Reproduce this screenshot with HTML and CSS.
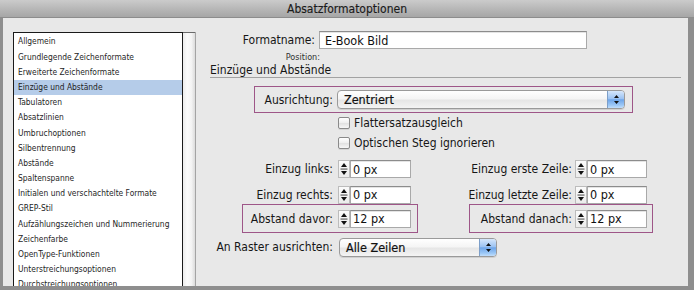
FILE: index.html
```html
<!DOCTYPE html>
<html lang="de">
<head>
<meta charset="utf-8">
<title>Absatzformatoptionen</title>
<link rel="stylesheet" href="styles.css">
</head>
<body>
<div class="window">
  <div class="titlebar">Absatzformatoptionen</div>
  <div class="content">
    <div class="sidebar">
      <ul class="list">
        <li>Allgemein</li>
        <li>Grundlegende Zeichenformate</li>
        <li>Erweiterte Zeichenformate</li>
        <li class="selected">Einzüge und Abstände</li>
        <li>Tabulatoren</li>
        <li>Absatzlinien</li>
        <li>Umbruchoptionen</li>
        <li>Silbentrennung</li>
        <li>Abstände</li>
        <li>Spaltenspanne</li>
        <li>Initialen und verschachtelte Formate</li>
        <li>GREP-Stil</li>
        <li>Aufzählungszeichen und Nummerierung</li>
        <li>Zeichenfarbe</li>
        <li>OpenType-Funktionen</li>
        <li>Unterstreichungsoptionen</li>
        <li>Durchstreichungsoptionen</li>
      </ul>
      <div class="scrolltrack"></div>
      <div class="divider"></div>
    </div>
    <div class="main">
      <div class="namerow">
        <span class="namelabel">Formatname:</span>
        <span class="field namefield">E-Book Bild</span>
      </div>
      <div class="position">Position:</div>
      <div class="heading">Einzüge und Abstände</div>

      <div class="alignbox">
        <span class="alignlabel">Ausrichtung:</span>
        <span class="popup alignpopup"><span class="popuptext">Zentriert</span><span class="popuparrows"><svg width="7" height="11" viewBox="0 0 7 11"><path d="M3.5 1 L6 4 L1 4 Z M3.5 10 L6 7 L1 7 Z" fill="#111"/></svg></span></span>
      </div>

      <div class="checkrow"><span class="checkbox"></span><span>Flattersatzausgleich</span></div>
      <div class="checkrow"><span class="checkbox"></span><span>Optischen Steg ignorieren</span></div>

      <div class="numrow row1">
        <span class="lbl lbl-l">Einzug links:</span>
        <span class="spin"><svg width="10" height="16" viewBox="0 0 10 16"><path d="M5 2 L8 6 L2 6 Z M5 14 L8 10 L2 10 Z" fill="#111"/><rect x="1.5" y="7.6" width="7" height="0.9" fill="#333"/></svg></span>
        <span class="field numfield">0 px</span>
        <span class="lbl lbl-r">Einzug erste Zeile:</span>
        <span class="spin spin-r"><svg width="10" height="16" viewBox="0 0 10 16"><path d="M5 2 L8 6 L2 6 Z M5 14 L8 10 L2 10 Z" fill="#111"/><rect x="1.5" y="7.6" width="7" height="0.9" fill="#333"/></svg></span>
        <span class="field numfield-r">0 px</span>
      </div>

      <div class="numrow row2">
        <span class="lbl lbl-l">Einzug rechts:</span>
        <span class="spin"><svg width="10" height="16" viewBox="0 0 10 16"><path d="M5 2 L8 6 L2 6 Z M5 14 L8 10 L2 10 Z" fill="#111"/><rect x="1.5" y="7.6" width="7" height="0.9" fill="#333"/></svg></span>
        <span class="field numfield">0 px</span>
        <span class="lbl lbl-r">Einzug letzte Zeile:</span>
        <span class="spin spin-r"><svg width="10" height="16" viewBox="0 0 10 16"><path d="M5 2 L8 6 L2 6 Z M5 14 L8 10 L2 10 Z" fill="#111"/><rect x="1.5" y="7.6" width="7" height="0.9" fill="#333"/></svg></span>
        <span class="field numfield-r">0 px</span>
      </div>

      <div class="numrow row3">
        <div class="hl hl-l">
          <span class="lbl hl-lbl-l">Abstand davor:</span>
          <span class="spin"><svg width="10" height="16" viewBox="0 0 10 16"><path d="M5 2 L8 6 L2 6 Z M5 14 L8 10 L2 10 Z" fill="#111"/><rect x="1.5" y="7.6" width="7" height="0.9" fill="#333"/></svg></span>
          <span class="field numfield">12 px</span>
        </div>
        <div class="hl hl-r">
          <span class="lbl hl-lbl-r">Abstand danach:</span>
          <span class="spin spin-r"><svg width="10" height="16" viewBox="0 0 10 16"><path d="M5 2 L8 6 L2 6 Z M5 14 L8 10 L2 10 Z" fill="#111"/><rect x="1.5" y="7.6" width="7" height="0.9" fill="#333"/></svg></span>
          <span class="field numfield-r">12 px</span>
        </div>
      </div>

      <div class="numrow row4">
        <span class="lbl lbl-l">An Raster ausrichten:</span>
        <span class="popup gridpopup"><span class="popuptext">Alle Zeilen</span><span class="popuparrows"><svg width="7" height="11" viewBox="0 0 7 11"><path d="M3.5 1 L6 4 L1 4 Z M3.5 10 L6 7 L1 7 Z" fill="#111"/></svg></span></span>
      </div>
    </div>
  </div>
</div>
</body>
</html>
```

FILE: styles.css
```css
* { box-sizing: border-box; }
html, body { margin: 0; padding: 0; }
body {
  width: 694px;
  height: 290px;
  overflow: hidden;
  background: #8e8e8e;
  font-family: "DejaVu Sans Condensed", "DejaVu Sans", sans-serif;
  color: #161616;
}
.window {
  width: 694px;
  height: 290px;
  display: flex;
  flex-direction: column;
  background: #8e8e8e;
}
.titlebar {
  flex: none;
  height: 18px;
  background: linear-gradient(#cbcbcb, #b4b4b4 60%, #a6a6a6);
  border-bottom: 1px solid #8c8c8c;
  text-align: center;
  font-size: 12px;
  line-height: 18px;
  color: #1a1a1a;
  -webkit-text-stroke: 0.15px #1a1a1a;
}
.content {
  flex: 1;
  margin: 0 6px 4px 3px;
  background: #e8e8e8;
  display: flex;
  overflow: hidden;
}
.sidebar {
  flex: none;
  display: flex;
  align-items: flex-start;
  padding: 14px 1px 0 10px;
}
.list {
  list-style: none;
  margin: 0;
  width: 170px;
  height: 290px;
  padding: 1.4px 0 0 0;
  background: #fff;
  border: 1px solid #1a1a1a;
  font-size: 8.4px;
  line-height: 15.2px;
  color: #1e1e1e;
}
.list li {
  padding-left: 4px;
  white-space: nowrap;
  height: 15.2px;
}
.list li.selected { background: #b5cce9; }
.scrolltrack {
  width: 12px;
  height: 290px;
  border-top: 1px solid #6a6a6a;
  background: linear-gradient(to right, #ececec, #fbfbfb 35%, #f4f4f4 70%, #dcdcdc);
}
.divider {
  width: 1px;
  height: 290px;
  background: #a4a4a4;
}
.main {
  flex: 1;
  display: flex;
  flex-direction: column;
  padding-top: 13px;
  font-size: 12px;
}
.field {
  display: flex;
  align-items: center;
  height: 18px;
  background: #fff;
  border: 1px solid #a9a9a9;
  border-top-color: #8c8c8c;
  box-shadow: inset 0 1px 0 #e4e4e4;
  padding-left: 2px;
  font-size: 12.5px;
  color: #111;
}
.namerow {
  display: flex;
  align-items: center;
  height: 18px;
}
.namelabel {
  width: 118px;
  text-align: right;
}
.namefield {
  margin-left: 4px;
  width: 268px;
  padding-left: 5px;
}
.position {
  margin-top: 3px;
  width: 123px;
  height: 10px;
  text-align: right;
  font-size: 9px;
  line-height: 10px;
  color: #333;
}
.heading {
  margin-top: 1px;
  margin-left: 13px;
  width: 471px;
  height: 15px;
  line-height: 14px;
  border-bottom: 1px solid #a2a2a2;
  font-size: 12px;
}
.alignbox {
  margin-top: 8px;
  margin-left: 57px;
  width: 379px;
  height: 27px;
  border: 1px solid #9e5688;
  display: flex;
  align-items: center;
}
.alignlabel {
  width: 78px;
  text-align: right;
}
.popup {
  display: flex;
  align-items: stretch;
  height: 19px;
  border: 1px solid #9a9a9a;
  border-radius: 4px;
  background: linear-gradient(#ffffff, #f5f5f5 45%, #e6e6e6 55%, #f4f4f4);
  box-shadow: 0 1px 0 #d0d0d0;
  overflow: hidden;
  font-size: 12.5px;
  color: #111;
  -webkit-text-stroke: 0.2px #111;
}
.popuptext {
  flex: 1;
  display: flex;
  align-items: center;
  padding-left: 6px;
}
.popuparrows {
  width: 17px;
  display: flex;
  align-items: center;
  justify-content: center;
  border-left: 1px solid #7d9fc9;
  background: linear-gradient(#d6e7fb, #9cc3f2 45%, #6ea5e9 52%, #9fcaf7 85%, #c2defb);
}
.alignpopup {
  margin-left: 4px;
  width: 288px;
}
.checkrow {
  display: flex;
  align-items: center;
  height: 20px;
  margin-left: 141px;
  gap: 4px;
}
.checkbox {
  width: 12px;
  height: 12px;
  border: 1px solid #8a8a8a;
  border-radius: 2px;
  background: linear-gradient(#ffffff, #eeeeee 50%, #e2e2e2 55%, #f6f6f6);
  box-shadow: 0 1px 0 #d4d4d4;
}
.numrow {
  display: flex;
  align-items: center;
}
.row1 { margin-top: 6px; height: 20px; }
.row2 { margin-top: 6px; height: 19px; }
.row3 { height: 29px; }
.row4 { margin-top: 4px; height: 20px; }
.lbl { text-align: right; white-space: nowrap; }
.lbl-l { width: 136px; }
.lbl-r { width: 161px; }
.spin {
  margin-left: 5px;
  width: 12px;
  height: 18px;
  display: flex;
  align-items: center;
  justify-content: center;
  border: 1px solid #bcbcbc;
  background: linear-gradient(#fbfbfb, #ececec);
}
.spin-r { margin-left: 3px; }
.numfield { width: 61px; }
.numfield-r { width: 60px; }
.hl {
  height: 29px;
  border: 1px solid #9e5688;
  display: flex;
  align-items: center;
}
.hl-l { margin-left: 45px; width: 176px; }
.hl-r { margin-left: 51px; width: 184px; }
.hl-lbl-l { width: 90px; }
.hl-lbl-r { width: 102px; }
.gridpopup {
  margin-left: 6px;
  width: 158px;
}
```
